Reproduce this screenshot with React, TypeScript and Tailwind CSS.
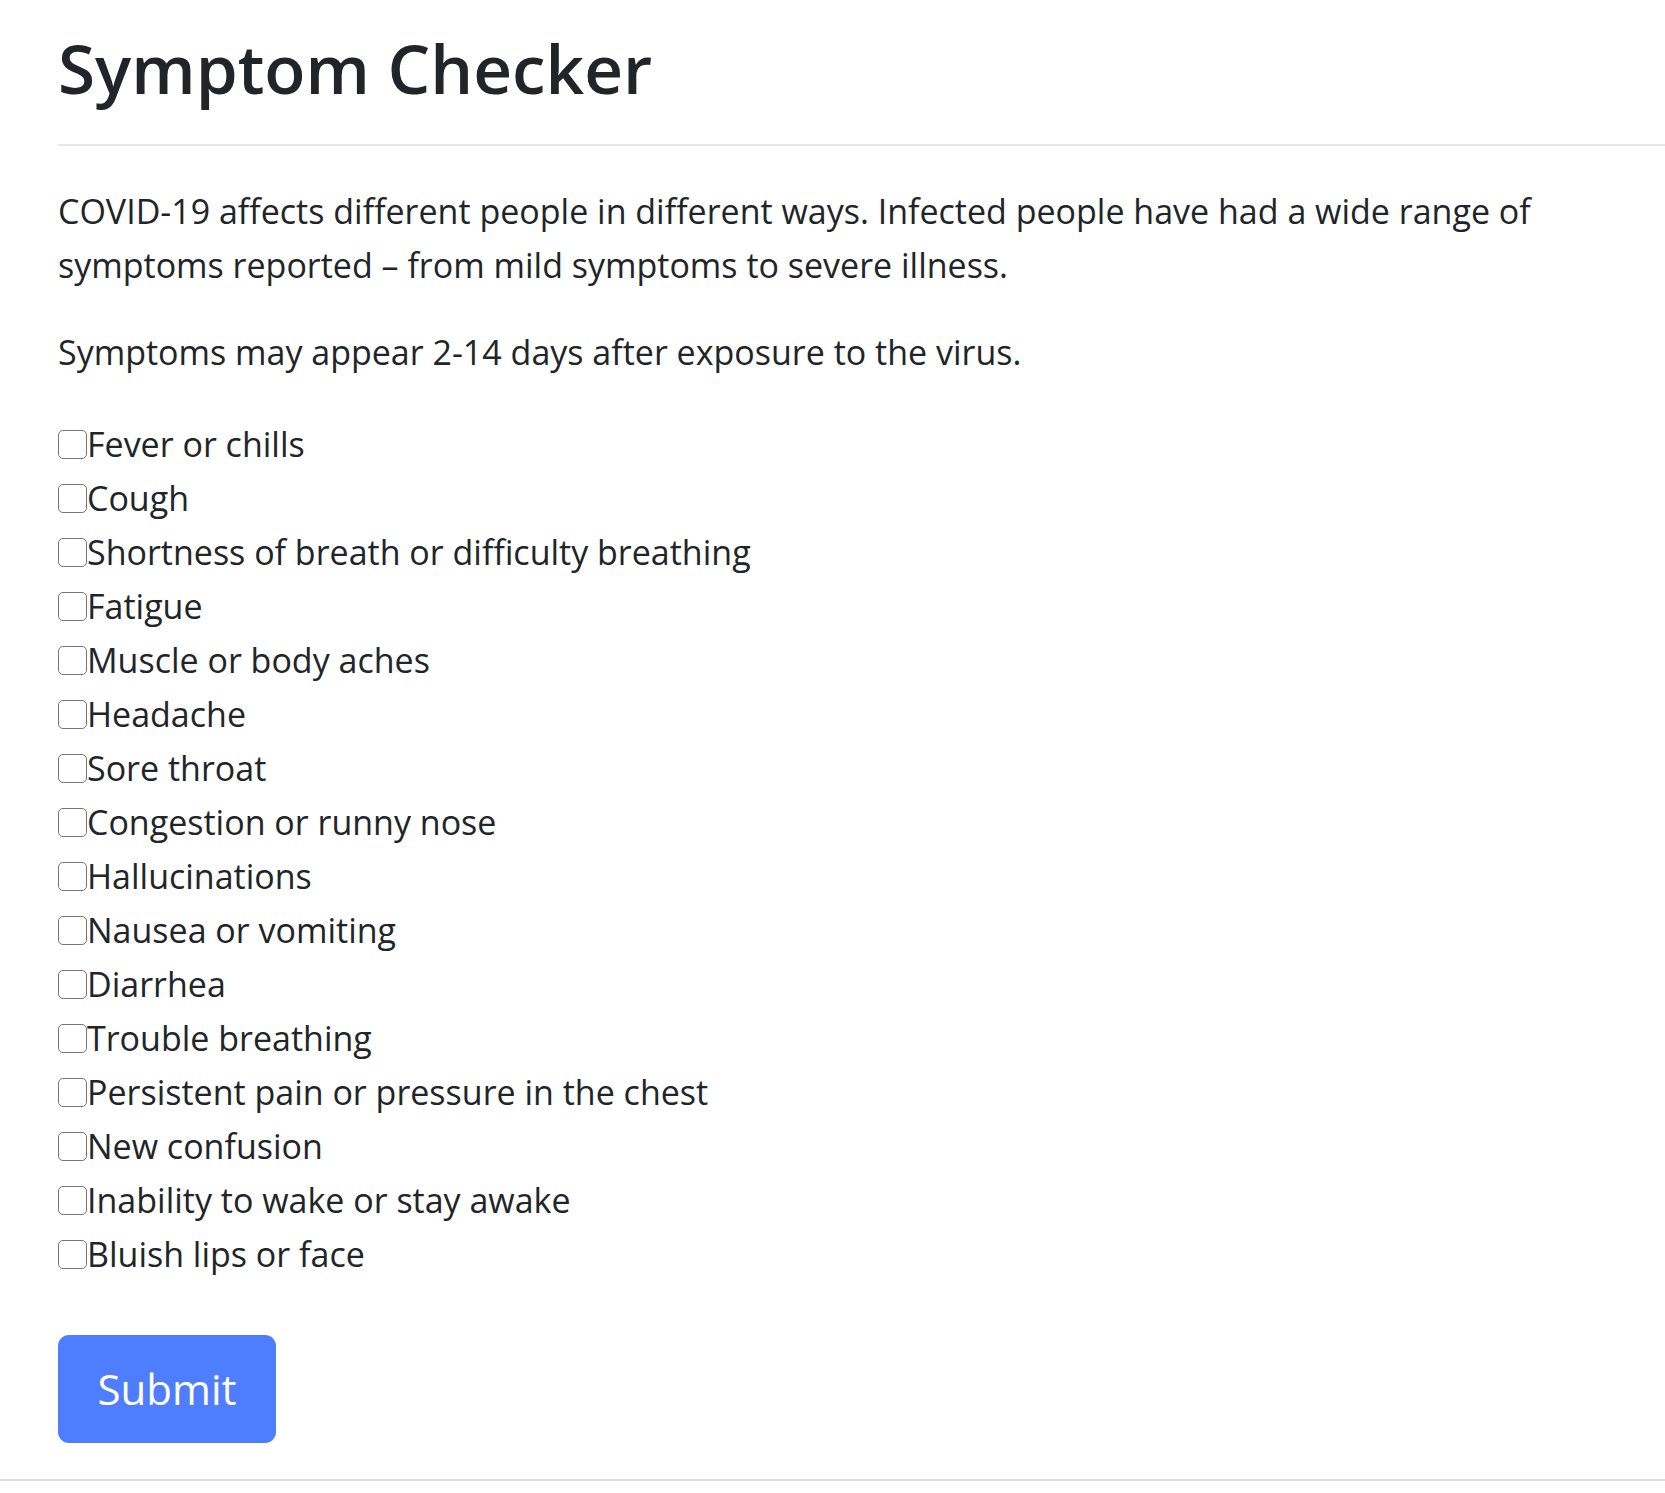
import React from "react";

const symptoms = [
  "Fever or chills",
  "Cough",
  "Shortness of breath or difficulty breathing",
  "Fatigue",
  "Muscle or body aches",
  "Headache",
  "Sore throat",
  "Congestion or runny nose",
  "Hallucinations",
  "Nausea or vomiting",
  "Diarrhea",
  "Trouble breathing",
  "Persistent pain or pressure in the chest",
  "New confusion",
  "Inability to wake or stay awake",
  "Bluish lips or face",
];

export default function App() {
  return (
    <div
      className="min-h-[1493px] w-full bg-white text-[#212529]"
      style={{ fontFamily: '"Open Sans", "Noto Sans", sans-serif' }}
    >
      <div className="pl-[58px] pt-[24px]">
        <h1 className="text-[67.5px] leading-[88px] font-semibold m-0">
          Symptom Checker
        </h1>
        <div className="mt-[32px] mb-[38px] h-[2px] bg-[#e6e6e6]" />
        <p className="text-[34px] leading-[54px] mb-[33px] w-[1540px]">
          COVID-19 affects different people in different ways. Infected people have had a wide range of symptoms reported – from mild symptoms to severe illness.
        </p>
        <p className="text-[34px] leading-[54px] mb-[38px]">
          Symptoms may appear 2-14 days after exposure to the virus.
        </p>
        <div className="flex flex-col">
          {symptoms.map((s) => (
            <label key={s} className="flex items-center h-[54px] text-[34px] leading-[54px]">
              <input
                type="checkbox"
                className="appearance-none w-[29px] h-[29px] border-[1.5px] border-[#767676] rounded-[5px] bg-white m-0 shrink-0"
              />
              <span>{s}</span>
            </label>
          ))}
        </div>
        <button
          type="button"
          className="mt-[54px] w-[218px] h-[108px] rounded-[11px] bg-[#4e7dfe] text-white text-[42px] leading-none flex items-center justify-center"
        >
          Submit
        </button>
      </div>
      <div className="mt-[36px] h-[2px] w-full bg-[#dedde3]" />
    </div>
  );
}
